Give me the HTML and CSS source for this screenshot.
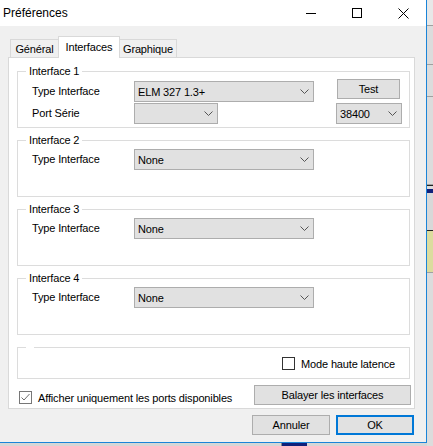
FILE: index.html
```html
<!DOCTYPE html>
<html lang="fr">
<head>
<meta charset="utf-8">
<title>Préférences</title>
<link rel="stylesheet" href="styles.css">
</head>
<body>
<div class="screen">
  <div class="window">
    <div class="titlebar">
      <span class="title">Préférences</span>
      <div class="caption-buttons">
        <span class="cap-btn"><svg width="10" height="10" viewBox="0 0 10 10"><path d="M0 5.5H10" stroke="#000" stroke-width="1"/></svg></span>
        <span class="cap-btn"><svg width="10" height="10" viewBox="0 0 10 10"><rect x="0.5" y="0.5" width="9" height="9" fill="none" stroke="#000" stroke-width="1"/></svg></span>
        <span class="cap-btn"><svg width="11" height="11" viewBox="0 0 11 11"><path d="M0.5 0.5L10.5 10.5M10.5 0.5L0.5 10.5" stroke="#000" stroke-width="1"/></svg></span>
      </div>
    </div>
    <div class="client">
      <div class="tabs">
        <div class="tab first-tab">Général</div>
        <div class="tab active">Interfaces</div>
        <div class="tab last-tab">Graphique</div>
      </div>
      <div class="panel">
        <div class="group">
          <div class="group-title">Interface 1</div>
          <div class="grid first">
            <span class="lbl">Type Interface</span>
            <div class="select wide"><span>ELM 327 1.3+</span><svg class="chev" width="9" height="5" viewBox="0 0 9 5"><path d="M0.5 0.5L4.5 4.5L8.5 0.5" fill="none" stroke="#555" stroke-width="1"/></svg></div>
            <span></span>
            <button class="btn test">Test</button>
            <span class="lbl">Port Série</span>
            <div class="select short"><span></span><svg class="chev" width="9" height="5" viewBox="0 0 9 5"><path d="M0.5 0.5L4.5 4.5L8.5 0.5" fill="none" stroke="#555" stroke-width="1"/></svg></div>
            <span></span>
            <div class="select baud"><span>38400</span><svg class="chev" width="9" height="5" viewBox="0 0 9 5"><path d="M0.5 0.5L4.5 4.5L8.5 0.5" fill="none" stroke="#555" stroke-width="1"/></svg></div>
          </div>
        </div>
        <div class="group">
          <div class="group-title">Interface 2</div>
          <div class="grid">
            <span class="lbl">Type Interface</span>
            <div class="select wide"><span>None</span><svg class="chev" width="9" height="5" viewBox="0 0 9 5"><path d="M0.5 0.5L4.5 4.5L8.5 0.5" fill="none" stroke="#555" stroke-width="1"/></svg></div>
          </div>
        </div>
        <div class="group">
          <div class="group-title">Interface 3</div>
          <div class="grid">
            <span class="lbl">Type Interface</span>
            <div class="select wide"><span>None</span><svg class="chev" width="9" height="5" viewBox="0 0 9 5"><path d="M0.5 0.5L4.5 4.5L8.5 0.5" fill="none" stroke="#555" stroke-width="1"/></svg></div>
          </div>
        </div>
        <div class="group">
          <div class="group-title">Interface 4</div>
          <div class="grid">
            <span class="lbl">Type Interface</span>
            <div class="select wide"><span>None</span><svg class="chev" width="9" height="5" viewBox="0 0 9 5"><path d="M0.5 0.5L4.5 4.5L8.5 0.5" fill="none" stroke="#555" stroke-width="1"/></svg></div>
          </div>
        </div>
        <div class="group small">
          <div class="group-title empty"></div>
          <div class="latency-row">
            <span class="checkbox"></span>
            <span>Mode haute latence</span>
          </div>
        </div>
        <div class="panel-footer">
          <div class="check-line">
            <span class="checkbox checked"><svg width="11" height="11" viewBox="0 0 11 11"><path d="M1.5 5.5L4 8L9.5 2" fill="none" stroke="#6e6e6e" stroke-width="1"/></svg></span>
            <span>Afficher uniquement les ports disponibles</span>
          </div>
          <button class="btn scan">Balayer les interfaces</button>
        </div>
      </div>
      <div class="dialog-buttons">
        <button class="btn dlg">Annuler</button>
        <button class="btn dlg ok">OK</button>
      </div>
    </div>
  </div>
  <div class="side-strip">
    <div class="seg s1"></div>
    <div class="seg s2"></div>
    <div class="seg s3"></div>
    <div class="seg s4"></div>
    <div class="seg s5"></div>
    <div class="seg s6"></div>
    <div class="seg s7"></div>
    <div class="seg s8"></div>
  </div>
  <div class="bottom-strip">
    <span class="bs light"></span>
    <span class="bs navy n1"></span>
    <span class="bs light l2"></span>
    <span class="bs navy n2"></span>
    <span class="bs light l3"></span>
  </div>
</div>
</body>
</html>
```

FILE: styles.css
```css
* { box-sizing: border-box; }
html, body { margin: 0; padding: 0; }
body {
  width: 433px;
  height: 446px;
  overflow: hidden;
  background: #e4e4e4;
  font-family: "Liberation Sans", Arial, sans-serif;
  font-size: 11px;
  letter-spacing: -0.15px;
  color: #000;
}
.screen {
  display: grid;
  grid-template-columns: 427px 6px;
  grid-template-rows: 443px 3px;
  width: 433px;
  height: 446px;
  overflow: hidden;
}
.window {
  grid-column: 1;
  grid-row: 1;
  display: flex;
  flex-direction: column;
  border-right: 1px solid #1a84d8;
  border-bottom: 1px solid #1a84d8;
  background: #f0f0f0;
  overflow: hidden;
}
.titlebar {
  height: 26px;
  background: #fff;
  display: flex;
  align-items: center;
  justify-content: space-between;
}
.title {
  font-size: 12px;
  letter-spacing: 0;
  padding-left: 3px;
  padding-bottom: 1px;
}
.caption-buttons { display: flex; height: 26px; }
.cap-btn {
  width: 46px;
  height: 26px;
  display: flex;
  align-items: center;
  justify-content: center;
}
.client {
  flex: 1;
  padding: 10px 11px 7px 8px;
  display: flex;
  flex-direction: column;
}
.tabs {
  display: flex;
  align-items: flex-end;
  padding-left: 2px;
  margin-bottom: -1px;
  position: relative;
  z-index: 1;
}
.tab {
  height: 18px;
  margin-bottom: 1px;
  border: 1px solid #d9d9d9;
  border-bottom: none;
  background: #f0f0f0;
  display: flex;
  align-items: center;
  justify-content: center;
  padding-top: 1px;
}
.first-tab { width: 48px; border-right: none; }
.last-tab { width: 57px; border-left: none; }
.tab.active {
  width: 62px;
  height: 22px;
  margin-bottom: 0;
  background: #fff;
  padding-top: 0;
  padding-bottom: 1px;
}
.panel {
  flex: none;
  height: 352px;
  background: #fff;
  border: 1px solid #d9d9d9;
  padding: 13px 4px 3px 8px;
  display: flex;
  flex-direction: column;
}
.group {
  height: 57px;
  border: 1px solid #dcdcdc;
  margin-bottom: 12px;
  flex: none;
}
.group.small { height: 32px; margin-bottom: 0; }
.group-title {
  width: max-content;
  height: 13px;
  line-height: 13px;
  margin: -7px 0 0 8px;
  padding: 0 3px;
  background: #fff;
}
.group-title.empty { width: 8px; }
.grid {
  display: grid;
  grid-template-columns: 102px 180px 22px 66px;
  grid-auto-rows: 21px;
  row-gap: 1px;
  padding-left: 14px;
  margin-top: 2px;
  align-items: center;
}
.grid.first { margin-top: 3px; }
.lbl { line-height: 13px; }
.select {
  height: 21px;
  background: #e1e1e1;
  border: 1px solid #adadad;
  display: flex;
  align-items: center;
  justify-content: space-between;
  padding: 0 4px 0 3px;
}
.select.wide { width: 180px; }
.select.short { width: 84px; }
.select.baud { width: 66px; }
.chev { display: block; }
.btn {
  font-family: inherit;
  font-size: 11px;
  letter-spacing: -0.15px;
  color: #000;
  background: #e1e1e1;
  border: 1px solid #adadad;
  height: 20px;
  padding: 0;
  margin: 0;
}
.btn.test {
  width: 63px;
  align-self: start;
  margin-top: -2px;
  margin-left: 1px;
}
.latency-row {
  display: flex;
  align-items: center;
  justify-content: flex-end;
  gap: 6px;
  padding-right: 14px;
  margin-top: 3px;
}
.checkbox {
  width: 13px;
  height: 13px;
  border: 1px solid #333;
  background: #fff;
  display: flex;
  align-items: center;
  justify-content: center;
  flex: none;
}
.checkbox.checked { border-color: #777; }
.panel-footer {
  margin-top: 6px;
  margin-right: -1px;
  padding-left: 2px;
  display: flex;
  justify-content: space-between;
  align-items: flex-end;
}
.check-line {
  display: flex;
  align-items: center;
  gap: 6px;
  padding-bottom: 1px;
}
.btn.scan { width: 157px; }
.dialog-buttons {
  margin-top: 6px;
  margin-right: 1px;
  display: flex;
  justify-content: flex-end;
  gap: 6px;
}
.btn.dlg { width: 78px; }
.btn.ok { border: 2px solid #0078d7; }
.side-strip {
  grid-column: 2;
  grid-row: 1 / span 2;
  display: flex;
  flex-direction: column;
  background: #dedede;
  overflow: hidden;
}
.seg { flex: none; }
.s1 { height: 26px; background: #e8e8e8; border-bottom: 1px solid #a0a0a0; }
.s2 { height: 39px; background: #dcdcdc; border-bottom: 1px solid #a0a0a0; }
.s3 { height: 32px; background: #dcdcdc; border-bottom: 1px solid #a0a0a0; }
.s4 { height: 88px; background: #dcdcdc; border-bottom: 1px solid #a0a0a0; }
.s5 { height: 8px; background: #dcdcdc; border-top: 1px solid #222; border-bottom: 4px solid #10207a; }
.s6 { height: 38px; background: #d8d8d8; border-bottom: 1px solid #222; }
.s7 { height: 42px; background: #dcdc9e; border-bottom: 1px solid #a0a0a0; }
.s8 { flex: 1; background: #dcdcdc; }
.bottom-strip {
  grid-column: 1;
  grid-row: 2;
  display: flex;
  background: #d0d0d0;
  overflow: hidden;
}
.bs { height: 3px; flex: none; }
.bs.light { width: 282px; background: #d6d6d6; border-right: 1px solid #888; }
.bs.navy { background: #10207a; }
.n1 { width: 25px; }
.l2 { width: 90px; }
.n2 { width: 16px; }
.l3 { width: 14px; }
```
